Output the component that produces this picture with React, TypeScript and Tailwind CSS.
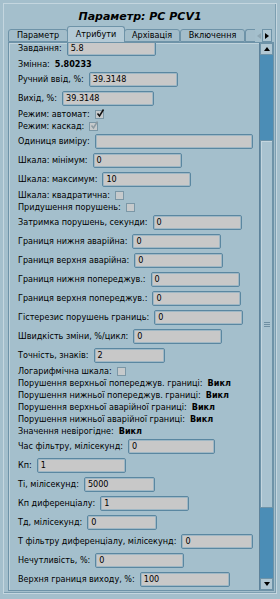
import type { ReactNode } from "react";

type Row =
  | { kind: "input"; label: string; value: string; w?: string }
  | { kind: "value"; label: string; value: string }
  | { kind: "check"; label: string; checked: boolean; disabled?: boolean };

const rows: Row[] = [
  { kind: "input", label: "Завдання:", value: "5.8" },
  { kind: "value", label: "Змінна:", value: "5.80233" },
  { kind: "input", label: "Ручний ввід, %:", value: "39.3148" },
  { kind: "input", label: "Вихід, %:", value: "39.3148", w: "w-[92px]" },
  { kind: "check", label: "Режим: автомат:", checked: true },
  { kind: "check", label: "Режим: каскад:", checked: true, disabled: true },
  { kind: "input", label: "Одиниця виміру:", value: "", w: "w-[158px]" },
  { kind: "input", label: "Шкала: мінімум:", value: "0" },
  { kind: "input", label: "Шкала: максимум:", value: "10" },
  { kind: "check", label: "Шкала: квадратична:", checked: false },
  { kind: "check", label: "Придушення порушень:", checked: false },
  { kind: "input", label: "Затримка порушень, секунди:", value: "0" },
  { kind: "input", label: "Границя нижня аварійна:", value: "0" },
  { kind: "input", label: "Границя верхня аварійна:", value: "0" },
  { kind: "input", label: "Границя нижня попереджув.:", value: "0" },
  { kind: "input", label: "Границя верхня попереджув.:", value: "0" },
  { kind: "input", label: "Гістерезис порушень границь:", value: "0" },
  { kind: "input", label: "Швидкість зміни, %/цикл:", value: "0" },
  { kind: "input", label: "Точність, знаків:", value: "2", w: "w-[71px]" },
  { kind: "check", label: "Логарифмічна шкала:", checked: false },
  { kind: "value", label: "Порушення верхньої попереджув. границі:", value: "Викл" },
  { kind: "value", label: "Порушення нижньої попереджув. границі:", value: "Викл" },
  { kind: "value", label: "Порушення верхньої аварійної границі:", value: "Викл" },
  { kind: "value", label: "Порушення нижньої аварійної границі:", value: "Викл" },
  { kind: "value", label: "Значення невірогідне:", value: "Викл" },
  { kind: "input", label: "Час фільтру, мілісекунд:", value: "0", w: "w-[87px]" },
  { kind: "input", label: "Кп:", value: "1" },
  { kind: "input", label: "Ті, мілісекунд:", value: "5000", w: "w-[71px]" },
  { kind: "input", label: "Кп диференціалу:", value: "1" },
  { kind: "input", label: "Тд, мілісекунд:", value: "0", w: "w-[70px]" },
  { kind: "input", label: "Т фільтру диференціалу, мілісекунд:", value: "0", w: "w-[72px]" },
  { kind: "input", label: "Нечутливість, %:", value: "0" },
  { kind: "input", label: "Верхня границя виходу, %:", value: "100", w: "w-[90px]" },
];

function CheckBox({ checked, disabled }: { checked: boolean; disabled?: boolean }) {
  return (
    <span className="relative inline-block h-[9px] w-[9px] shrink-0 border border-[#7b97a6] bg-[#c6cacc]">
      {checked ? (
        <svg viewBox="0 0 9 9" className="absolute -top-[2px] left-[0px] h-[9px] w-[9px]">
          <path
            d="M1.5 4.5 L3.5 7 L7.5 0.5"
            fill="none"
            stroke={disabled ? "#8c9aa2" : "#111"}
            strokeWidth="1.5"
          />
        </svg>
      ) : null}
    </span>
  );
}

function Field({ value, w }: { value: string; w?: string }) {
  return (
    <div
      className={`flex h-[15px] shrink-0 items-center rounded-[2px] border border-[#5a87a1] bg-[#c8c8c8] pl-[3px] shadow-[inset_0_0_0_1px_#9fb7c4] ${w ?? "w-[89px]"}`}
    >
      {value}
    </div>
  );
}

function Tab({ children, w, active }: { children: ReactNode; w: string; active?: boolean }) {
  if (active) {
    return (
      <div
        className={`z-10 -mx-[1px] flex h-[16px] shrink-0 items-center justify-center rounded-t-[3px] border border-b-0 border-[#6e93a8] bg-[#b4cad6] ${w}`}
      >
        {children}
      </div>
    );
  }
  return (
    <div
      className={`flex h-[13px] shrink-0 items-center justify-center rounded-t-[3px] border border-[#6e93a8] bg-[#a3bdca] ${w}`}
    >
      {children}
    </div>
  );
}

export default function App() {
  return (
    <div className="h-[599px] w-[280px] overflow-hidden bg-[#a4bfcc] px-[3px] pb-[5px] pt-[3px] font-['DejaVu_Sans_Condensed','DejaVu_Sans',sans-serif] text-[9px] leading-none text-black [font-stretch:condensed]">
      <div className="flex h-[591px] flex-col border border-[#c4d6df] shadow-[inset_-1px_-1px_0_#7d9fb1]">
        <div className="flex h-[23px] shrink-0 items-center justify-center pt-[2px] font-['DejaVu_Sans',sans-serif] text-[11px] font-bold italic [font-stretch:normal]">
          Параметр: PC PCV1
        </div>

        <div className="ml-[4px] mr-[2px] flex h-[15px] shrink-0 items-end">
          <Tab w="w-[60px]">Параметр</Tab>
          <Tab w="w-[58px]" active>
            Атрибути
          </Tab>
          <Tab w="w-[56px]">Архівація</Tab>
          <Tab w="w-[65px]">Включення</Tab>
          <div className="h-[13px] w-[10px] shrink-0 rounded-tl-[3px] border border-r-0 border-[#6e93a8] bg-[#a3bdca]" />
          <div className="flex h-[13px] w-[7px] shrink-0 items-center justify-center">
            <span className="h-0 w-0 border-y-[3px] border-r-[4px] border-y-transparent border-r-[#8ea6b3]" />
          </div>
          <div className="flex h-[13px] w-[10px] shrink-0 items-center justify-center border border-[#6e93a8] bg-[#b0c7d3]">
            <span className="h-0 w-0 border-y-[3px] border-l-[4px] border-y-transparent border-l-black" />
          </div>
        </div>

        <div className="ml-[4px] mr-[2px] flex min-h-0 flex-1 border border-[#6e93a8] bg-[#a4bfcc] shadow-[inset_1px_1px_0_#c0d3dc]">
          <div className="min-w-0 flex-1 overflow-hidden pl-[9px]">
            <div className="-mt-[4px] flex flex-col">
              {rows.map((r, i) => {
                if (r.kind === "input") {
                  return (
                    <div key={i} className="flex h-[19px] items-center gap-[5px] whitespace-nowrap">
                      <span>{r.label}</span>
                      <Field value={r.value} w={r.w} />
                    </div>
                  );
                }
                if (r.kind === "check") {
                  return (
                    <div key={i} className="flex h-[12px] items-center gap-[5px] whitespace-nowrap">
                      <span>{r.label}</span>
                      <CheckBox checked={r.checked} disabled={r.disabled} />
                    </div>
                  );
                }
                return (
                  <div key={i} className="flex h-[12px] items-center gap-[5px] whitespace-nowrap">
                    <span>{r.label}</span>
                    <span className="font-bold">{r.value}</span>
                  </div>
                );
              })}
            </div>
          </div>

          <div className="flex w-[14px] shrink-0 flex-col border-l border-[#5d829a] bg-[#4b8db6]">
            <div className="flex h-[12px] shrink-0 items-center justify-center border border-[#6e93a8] bg-[#b0c7d3]">
              <span className="h-0 w-0 border-x-[3px] border-b-[4px] border-x-transparent border-b-black" />
            </div>
            <div className="h-[85px] shrink-0" />
            <div className="flex h-[368px] shrink-0 items-center justify-center border border-[#6e93a8] bg-[#a9c3d0] shadow-[inset_1px_1px_0_#c4d6df]">
              <div className="flex w-[6px] flex-col gap-[1px]">
                <span className="h-px bg-[#6e8fa2]" />
                <span className="h-px bg-[#6e8fa2]" />
                <span className="h-px bg-[#6e8fa2]" />
              </div>
            </div>
            <div className="flex-1" />
            <div className="flex h-[12px] shrink-0 items-center justify-center border border-[#6e93a8] bg-[#b0c7d3]">
              <span className="h-0 w-0 border-x-[3px] border-t-[4px] border-x-transparent border-t-black" />
            </div>
          </div>
        </div>
        <div className="h-[2px] shrink-0" />
      </div>
    </div>
  );
}
